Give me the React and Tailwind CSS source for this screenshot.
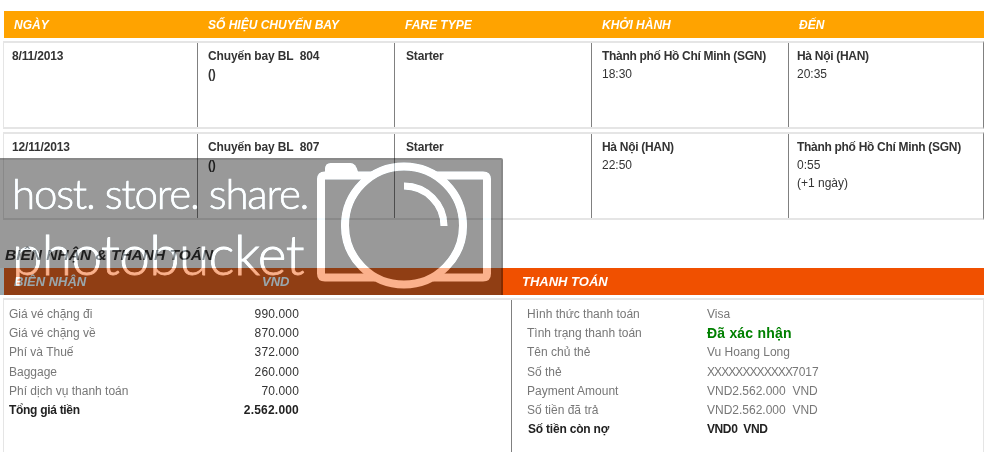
import React from 'react';

const flights = [
    {
        date: '8/11/2013',
        flight: 'Chuyến bay BL\u00a0\u00a0804',
        fare: 'Starter',
        from: 'Thành phố Hồ Chí Minh (SGN)',
        depart: '18:30',
        to: 'Hà Nội (HAN)',
        arrive: '20:35',
    },
    {
        date: '12/11/2013',
        flight: 'Chuyến bay BL\u00a0\u00a0807',
        fare: 'Starter',
        from: 'Hà Nội (HAN)',
        depart: '22:50',
        to: 'Thành phố Hồ Chí Minh (SGN)',
        arrive: '0:55',
        extra: '(+1 ngày)',
    },
];

const receipt = [
    ['Giá vé chặng đi', '990.000'],
    ['Giá vé chặng về', '870.000'],
    ['Phí và Thuế', '372.000'],
    ['Baggage', '260.000'],
    ['Phí dịch vụ thanh toán', '70.000'],
];

const payment = [
    ['Hình thức thanh toán', 'Visa'],
    ['Tình trạng thanh toán', 'Đã xác nhận'],
    ['Tên chủ thẻ', 'Vu Hoang Long'],
    ['Số thẻ', 'XXXXXXXXXXXX7017'],
    ['Payment Amount', 'VND2.562.000\u00a0\u00a0VND'],
    ['Số tiền đã trả', 'VND2.562.000\u00a0\u00a0VND'],
];

const FlightRow = ({ item }) => (
    <div className="grid grid-cols-[193px_197px_197px_197px_195px] h-[88px] ml-[3px] w-[981px] border-y-2 border-y-[#e5e5e5] border-l border-l-[#e5e5e5] border-r border-r-[#808080] text-[12px] leading-[18px] text-[#333]">
        <div className="pl-[8px] pt-[4px] font-bold tracking-[-0.15px]">{item.date}</div>
        <div className="pl-[10px] pt-[4px] border-l border-[#808080] font-bold tracking-[-0.15px]">
            <div>{item.flight}</div>
            <div>()</div>
        </div>
        <div className="pl-[11px] pt-[4px] border-l border-[#808080] font-bold tracking-[-0.15px]">{item.fare}</div>
        <div className="pl-[10px] pt-[4px] border-l border-[#808080]">
            <div className="font-bold tracking-[-0.3px]">{item.from}</div>
            <div>{item.depart}</div>
        </div>
        <div className="pl-[8px] pt-[4px] border-l border-[#808080]">
            <div className="font-bold tracking-[-0.3px]">{item.to}</div>
            <div>{item.arrive}</div>
            {item.extra && <div>{item.extra}</div>}
        </div>
    </div>
);

// The hosting watermark: a dark veil, and a logo added on top so it goes white on the
// page and peach on the orange bar
const Watermark = () => (
    <div className="absolute left-0 top-[158px] w-[503px] h-[137px] bg-black/40 border-t-2 border-r-2 border-black/10 rounded-tr-[2px] pointer-events-none">
        <div className="absolute left-0 top-[108px] w-[501px] h-[27px] bg-[#000e14] mix-blend-plus-lighter"></div>
        <div className="absolute left-0 top-[-2px] w-[503px] h-[137px] mix-blend-plus-lighter text-[#6b7378] font-['Lato',sans-serif]">
            <div className="absolute left-[12px] top-[10px] text-[42px] leading-[50px] font-light tracking-[-1.2px] [-webkit-text-stroke:0.6px_#6b7378] whitespace-nowrap">host. store. share.</div>
            <div className="absolute left-[12px] top-[66px] text-[55px] leading-[60px] font-light tracking-[-0.6px] [-webkit-text-stroke:0.8px_#6b7378] whitespace-nowrap">photobucket</div>
            <svg className="absolute left-0 top-0" width="503" height="137" viewBox="0 0 503 137" fill="none" stroke="currentColor">
                <path d="M373 17.5 H325 Q321 17.5 321 21.5 V115.5 Q321 119.5 325 119.5 H375" strokeWidth="8" />
                <path d="M435 17.5 H483 Q487 17.5 487 21.5 V115.5 Q487 119.5 483 119.5 H433" strokeWidth="8" />
                <path d="M325 14 V11 Q325 5 331 5 H350 Q356 5 358 14 Z" fill="currentColor" stroke="none" />
                <circle cx="404" cy="67.5" r="59" strokeWidth="8" />
                <path d="M404 28 A40 40 0 0 1 444 68" strokeWidth="7" />
            </svg>
        </div>
    </div>
);

const App = () => {
    return (
        <div className="relative w-[1005px] h-[452px] overflow-hidden bg-white font-['Liberation_Sans',Arial,sans-serif]">
            <div className="pt-[11px]">
                {/* Flight table */}
                <div className="ml-[4px] w-[980px] h-[27px] bg-[#ffa300] grid grid-cols-[193px_197px_197px_197px_196px] items-center text-white italic font-bold text-[12px]">
                    <span className="pl-[10px]">NGÀY</span>
                    <span className="pl-[11px]">SỐ HIỆU CHUYẾN BAY</span>
                    <span className="pl-[11px]">FARE TYPE</span>
                    <span className="pl-[11px]">KHỞI HÀNH</span>
                    <span className="pl-[11px]">ĐẾN</span>
                </div>
                <div className="mt-[3px] flex flex-col gap-[3px]">
                    {flights.map(item => <FlightRow key={item.date} item={item} />)}
                </div>

                {/* Receipt and payment */}
                <h2 className="mt-[27px] ml-[5px] text-[15.5px] leading-[16px] italic font-bold text-[#333] whitespace-nowrap">BIÊN NHẬN &amp; THANH TOÁN</h2>
                <div className="mt-[5px] ml-[4px] w-[980px] h-[27px] bg-[#f05000] flex items-center text-white italic font-bold text-[13px]">
                    <span className="pl-[10px] w-[258px]">BIÊN NHẬN</span>
                    <span className="w-[260px]">VND</span>
                    <span>THANH TOÁN</span>
                </div>
                <div className="mt-[3px] ml-[3px] w-[981px] h-[170px] border-2 border-l border-r border-[#e5e5e5] flex text-[12px] leading-[19.2px]">
                    <div className="w-[507px] pl-[5px] pt-[5px]">
                        {receipt.map(([label, value]) => (
                            <div key={label} className="flex w-[290px] justify-between text-[#777]">
                                <span>{label}</span>
                                <span className="text-[#333] tracking-[0.15px]">{value}</span>
                            </div>
                        ))}
                        <div className="flex w-[290px] justify-between font-bold text-[#222]">
                            <span className="tracking-[-0.3px]">Tổng giá tiền</span>
                            <span className="tracking-[0.2px]">2.562.000</span>
                        </div>
                    </div>
                    <div className="pl-[15px] pt-[5px] border-l border-[#808080] flex-1">
                        {payment.map(([label, value]) => (
                            <div key={label} className="flex text-[#777]">
                                <span className="w-[180px]">{label}</span>
                                {value === 'Đã xác nhận' && <span className="font-bold text-[14px] tracking-[0.2px] text-[#008000]">{value}</span>}
                                {value.startsWith('XXX') && (
                                    <span><span className="tracking-[-0.92px]">{value.slice(0, -4)}</span>{value.slice(-4)}</span>
                                )}
                                {value !== 'Đã xác nhận' && !value.startsWith('XXX') && <span>{value}</span>}
                            </div>
                        ))}
                        <div className="flex font-bold text-[#222]">
                            <span className="w-[180px] pl-[1px] tracking-[-0.2px]">Số tiền còn nợ</span>
                            <span className="tracking-[-0.4px]">VND0&nbsp;&nbsp;VND</span>
                        </div>
                    </div>
                </div>
            </div>
            <Watermark />
        </div>
    );
};

export default App;
